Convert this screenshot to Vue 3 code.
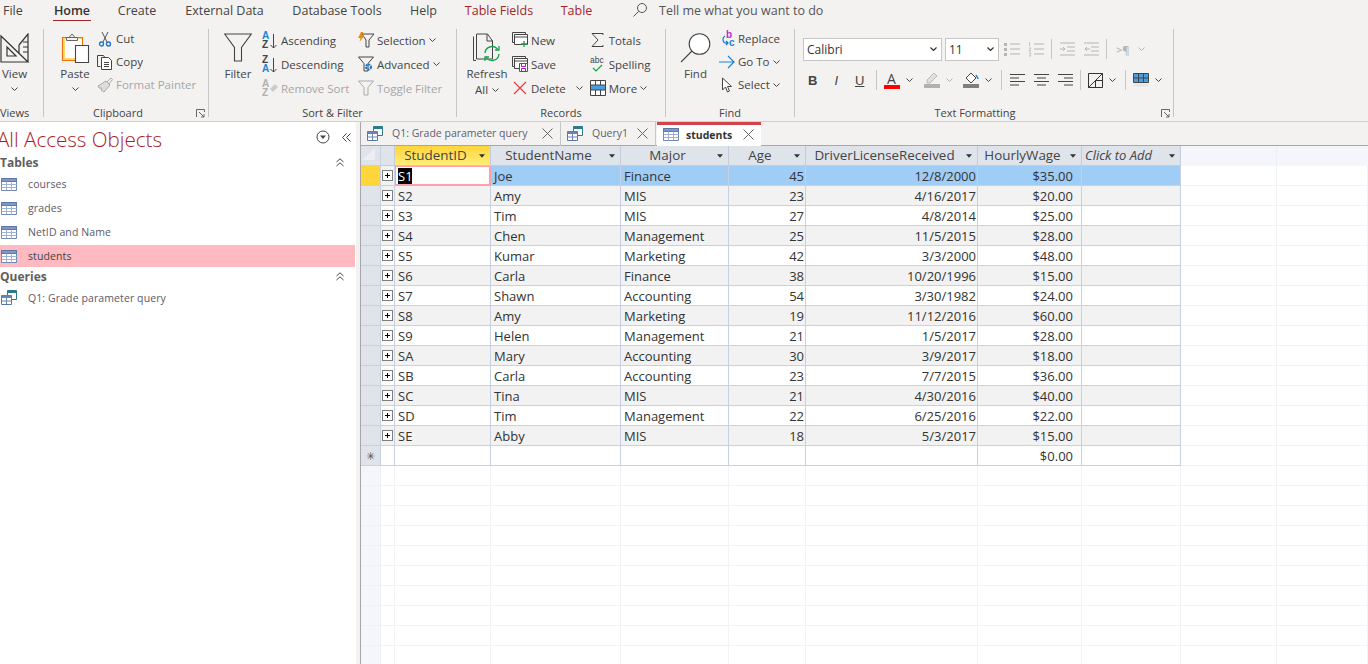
<script setup>
const tabs = [
  { t: 'File', w: 40 }, { t: 'Home', w: 64, active: true }, { t: 'Create', w: 66 }, { t: 'External Data', w: 109 },
  { t: 'Database Tools', w: 116 }, { t: 'Help', w: 57 }, { t: 'Table Fields', w: 94, red: true }, { t: 'Table', w: 61, red: true }
]
const cols = [
  { t: 'StudentID', active: true }, { t: 'StudentName' }, { t: 'Major' }, { t: 'Age' },
  { t: 'DriverLicenseReceived' }, { t: 'HourlyWage' }, { t: 'Click to Add', italic: true }
]
const rows = [
  ['S1','Joe','Finance','45','12/8/2000','$35.00'],['S2','Amy','MIS','23','4/16/2017','$20.00'],
  ['S3','Tim','MIS','27','4/8/2014','$25.00'],['S4','Chen','Management','25','11/5/2015','$28.00'],
  ['S5','Kumar','Marketing','42','3/3/2000','$48.00'],['S6','Carla','Finance','38','10/20/1996','$15.00'],
  ['S7','Shawn','Accounting','54','3/30/1982','$24.00'],['S8','Amy','Marketing','19','11/12/2016','$60.00'],
  ['S9','Helen','Management','21','1/5/2017','$28.00'],['SA','Mary','Accounting','30','3/9/2017','$18.00'],
  ['SB','Carla','Accounting','23','7/7/2015','$36.00'],['SC','Tina','MIS','21','4/30/2016','$40.00'],
  ['SD','Tim','Management','22','6/25/2016','$22.00'],['SE','Abby','MIS','18','5/3/2017','$15.00']
]
const navTables = ['courses', 'grades', 'NetID and Name', 'students']
const blanks = Array.from({ length: 10 }, (_, i) => i)
</script>

<template>
  <div class="app">
    <div class="tabbar">
      <div v-for="t in tabs" :key="t.t" class="tab" :class="{ red: t.red, on: t.active }" :style="{ width: t.w + 'px' }"><span>{{ t.t }}</span></div>
      <svg class="search" width="16" height="16" viewBox="0 0 16 16" fill="none" stroke="#555"><circle cx="10" cy="6" r="4.5"/><path d="M6.7 9.3 1.5 14.5"/></svg>
      <span class="tell">Tell me what you want to do</span>
    </div>

    <div class="ribbon">
      <section class="group g-views">
        <div class="gbody">
          <div class="big w29">
            <svg width="30" height="30" viewBox="0 0 30 30" fill="none" stroke="#333" stroke-width="1.2"><path d="M1 3 28 29H1zM7 14l9 9H7zM19 12 28 1v28M19 12v8M23 9h5M23 14h5M23 19h5"/></svg>
            <span>View</span>
            <svg class="chev" width="7" height="4" viewBox="0 0 7 4"><path d="M.5.5 3.5 3.5 6.5.5" fill="none" stroke="#444"/></svg>
          </div>
        </div>
        <div class="glabel">Views</div>
      </section>

      <section class="group g-clip">
        <div class="gbody">
          <div class="big w28">
            <svg width="29" height="30" viewBox="0 0 29 30" fill="none"><path d="M1.500 4.500h20v23h-20z" fill="#ffd970" stroke="#e8730c" stroke-width="1.200"/><path d="M4 6h17v19H4z" fill="#fff"/><path d="M5.500 4.500h11v3h-11zM8 4.500 11 1l3 3.500" fill="#f3f2f1" stroke="#666"/><path d="M14.500 12.500h13v17h-13z" fill="#fff" stroke="#444" stroke-width="1.100"/></svg>
            <span>Paste</span>
            <svg class="chev" width="7" height="4" viewBox="0 0 7 4"><path d="M.5.5 3.5 3.5 6.5.5" fill="none" stroke="#444"/></svg>
          </div>
          <div class="stack st23 ml8">
            <div class="sm"><svg width="16" height="16" viewBox="0 0 16 16" fill="none"><path d="M5 1 10 11M11 1 6 11" stroke="#555"/><circle cx="4.500" cy="13" r="2" stroke="#1a73c8" stroke-width="1.300"/><circle cx="11.500" cy="13" r="2" stroke="#1a73c8" stroke-width="1.300"/></svg><span>Cut</span></div>
            <div class="sm"><svg width="16" height="16" viewBox="0 0 16 16" fill="none" stroke="#444"><path d="M3.500 12.500H.5V1.500h6l1 1.500"/><path d="M4.500 3.500h7l3 3v9h-10z" fill="#fff"/><path d="M7 8.500h5M7 10.500h5M7 12.500h5"/></svg><span>Copy</span></div>
            <div class="sm dis"><svg width="16" height="16" viewBox="0 0 16 16" fill="none" stroke="#aaa"><path d="M1 9 9 4l4 4-6 7-3-2 1-2-3 0z" fill="#ddd"/><path d="M10 5 14 1l1.500 1.500L12 7"/></svg><span>Format Painter</span></div>
          </div>
        </div>
        <div class="glabel lb-clip">Clipboard</div>
        <svg class="launcher" width="9" height="9" viewBox="0 0 9 9" fill="none" stroke="#666"><path d="M.5 8V.5H8.500V3M3 3l5 5M5 8h3V5"/></svg>
      </section>

      <section class="group g-sort">
        <div class="gbody">
          <div class="big w28">
            <svg width="28" height="30" viewBox="0 0 28 30" fill="#f3f2f1" stroke="#444" stroke-width="1.100"><path d="M.7 1h26.600L17.500 14.500V28h-7V14.500z"/></svg>
            <span>Filter</span>
          </div>
          <div class="stack st24 ml10">
            <div class="sm wide"><svg width="16" height="18" viewBox="0 0 16 18"><text x="0" y="8" class="az blue">A</text><text x="0" y="17" class="az">Z</text><path d="M11.500 3v14M8.500 14l3 3 3-3" fill="none" stroke="#444"/></svg><span>Ascending</span></div>
            <div class="sm wide"><svg width="16" height="18" viewBox="0 0 16 18"><text x="0" y="8" class="az">Z</text><text x="0" y="17" class="az blue">A</text><path d="M11.500 3v14M8.500 14l3 3 3-3" fill="none" stroke="#444"/></svg><span>Descending</span></div>
            <div class="sm wide dis"><svg width="16" height="18" viewBox="0 0 16 18"><text x="0" y="8" class="az gray">A</text><text x="0" y="17" class="az gray">Z</text><path d="M8 10l5-5 3 3-5 5z" fill="#ccc"/></svg><span>Remove Sort</span></div>
          </div>
          <div class="stack st24">
            <div class="sm"><svg width="16" height="16" viewBox="0 0 16 16" fill="none"><path d="M4 2h12l-5 6v7H8V8z" fill="#f3f2f1" stroke="#444"/><path d="M3 0 0 6h2.500L1.500 10 6 4H3.500L5.500 0z" fill="#ed8b00"/></svg><span>Selection</span><svg width="7" height="4" viewBox="0 0 7 4"><path d="M.5.5 3.500 3.500 6.500.5" fill="none" stroke="#444"/></svg></div>
            <div class="sm"><svg width="16" height="16" viewBox="0 0 16 16" fill="none"><path d="M.5 1h15L10 7.500V15H6V7.500z" fill="#f3f2f1" stroke="#444"/><circle cx="10.500" cy="11" r="2.500" stroke="#1a73c8" stroke-width="2" stroke-dasharray="2 .8"/></svg><span>Advanced</span><svg width="7" height="4" viewBox="0 0 7 4"><path d="M.5.5 3.500 3.500 6.500.5" fill="none" stroke="#444"/></svg></div>
            <div class="sm dis"><svg width="16" height="16" viewBox="0 0 16 16" fill="none" stroke="#aaa"><path d="M.5 1h15L10 7.500V15H6V7.500z"/></svg><span>Toggle Filter</span></div>
          </div>
        </div>
        <div class="glabel">Sort &amp; Filter</div>
      </section>

      <section class="group g-rec">
        <div class="gbody">
          <div class="big w40">
            <svg width="28" height="30" viewBox="0 0 28 30" fill="none"><path d="M3.500 1h11l5 7v18h-16z" stroke="#444" fill="#f3f2f1"/><path d="M.5 3.500v24H3" stroke="#444"/><path d="M14 1v7h6" stroke="#444"/><path d="M12 20a7 7 0 0 1 13-3M26 21a7 7 0 0 1-13 3" stroke="#16a34a" stroke-width="1.300"/><path d="M26 13v4h-4M12 28v-4h4" stroke="#16a34a" stroke-width="1.300"/></svg>
            <span>Refresh</span>
            <span class="all">All <svg width="7" height="4" viewBox="0 0 7 4"><path d="M.5.5 3.500 3.500 6.500.5" fill="none" stroke="#444"/></svg></span>
          </div>
          <div class="stack st24 ml5">
            <div class="sm"><svg width="16" height="16" viewBox="0 0 16 16" fill="none" stroke="#444"><path d="M2.500 2.500h13v10h-13z" fill="#fff"/><path d="M.5.500h13v2M.5.500v10h2M2.500 5h13"/><path d="M12 9v6M9 12h6" stroke="#16a34a" stroke-width="1.300"/></svg><span>New</span></div>
            <div class="sm"><svg width="16" height="16" viewBox="0 0 16 16" fill="none" stroke="#444"><path d="M2.500 2.500h13v10h-13z" fill="#fff"/><path d="M.5.500h13v2M.5.500v10h2M2.500 5h13"/><path d="M7.500 7.500h8v8h-8zM9.500 7.500v3h4v-3M9.500 15.500v-3h4v3" fill="#fff" stroke="#a21caf"/></svg><span>Save</span></div>
            <div class="sm"><svg width="16" height="16" viewBox="0 0 16 16" fill="none" stroke="#e0403a" stroke-width="1.200"><path d="M2 2l12 12M14 2 2 14"/></svg><span>Delete</span><svg class="c3" width="7" height="4" viewBox="0 0 7 4"><path d="M.5.5 3.500 3.500 6.500.5" fill="none" stroke="#444"/></svg></div>
          </div>
          <div class="stack st24 rcol">
            <div class="sm"><svg width="16" height="16" viewBox="0 0 16 16" fill="none" stroke="#444"><path d="M13 3V1.500H2L8 8l-6 6.500h11V13"/></svg><span>Totals</span></div>
            <div class="sm"><svg width="16" height="18" viewBox="0 0 16 18" fill="none"><text x="0" y="8" class="abc">abc</text><path d="M3 13l3 3 6-6" stroke="#16a34a" stroke-width="1.200"/></svg><span>Spelling</span></div>
            <div class="sm"><svg width="16" height="16" viewBox="0 0 16 16" fill="none" stroke="#444"><path d="M.5.500h15v15H.5z" fill="#fff"/><path d="M1 5h14v5H1z" fill="#4a9de0" stroke="none"/><path d="M.5 5h15M.5 10h15M5.500 10v5M10.500 10v5M5.500.5V5M10.500.5V5"/></svg><span>More</span><svg width="7" height="4" viewBox="0 0 7 4"><path d="M.5.5 3.500 3.500 6.500.5" fill="none" stroke="#444"/></svg></div>
          </div>
        </div>
        <div class="glabel">Records</div>
      </section>

      <section class="group g-find">
        <div class="gbody">
          <div class="big w30">
            <svg width="31" height="30" viewBox="0 0 31 30" fill="#fff" stroke="#444" stroke-width="1.100"><circle cx="19.500" cy="11" r="10.300"/><path d="M12 18 1 29"/></svg>
            <span>Find</span>
          </div>
          <div class="stack st23 ml8">
            <div class="sm"><svg width="16" height="18" viewBox="0 0 16 18" fill="none"><text x="7" y="8" class="az mag">b</text><text x="10" y="16" class="az blue">c</text><path d="M6 6a4 4 0 0 0 0 7l3 0M7 11l2 2-2 2" stroke="#1a73c8" stroke-width="1.200"/></svg><span>Replace</span></div>
            <div class="sm"><svg width="16" height="16" viewBox="0 0 16 16" fill="none" stroke="#1a84d8" stroke-width="1.200"><path d="M0 8h15M9 2l6 6-6 6"/></svg><span>Go To</span><svg width="7" height="4" viewBox="0 0 7 4"><path d="M.5.5 3.500 3.500 6.500.5" fill="none" stroke="#444"/></svg></div>
            <div class="sm"><svg width="16" height="16" viewBox="0 0 16 16" fill="#fff" stroke="#444"><path d="M3.500 1v12l3-3 2 5 2-1-2-4.500h4z"/></svg><span>Select</span><svg width="7" height="4" viewBox="0 0 7 4"><path d="M.5.5 3.500 3.500 6.500.5" fill="none" stroke="#444"/></svg></div>
          </div>
        </div>
        <div class="glabel">Find</div>
      </section>

      <section class="group g-text">
        <div class="gbody col">
          <div class="trow r1">
            <div class="sel font"><span>Calibri</span><svg width="7" height="4" viewBox="0 0 7 4"><path d="M.5.5 3.500 3.500 6.500.5" fill="none" stroke="#333" stroke-width="1.200"/></svg></div>
            <div class="sel size"><span>11</span><svg width="7" height="4" viewBox="0 0 7 4"><path d="M.5.5 3.500 3.500 6.500.5" fill="none" stroke="#333" stroke-width="1.200"/></svg></div>
            <svg class="ti m5" width="16" height="16" viewBox="0 0 16 16" stroke="#b5b5b5"><path d="M6 3h10M6 8h10M6 13h10" fill="none"/><path d="M0 2h3v3H0zM0 7h3v3H0zM0 12h3v3H0z" fill="#b5b5b5" stroke="none"/></svg>
            <svg class="ti m8" width="16" height="16" viewBox="0 0 16 16" stroke="#b5b5b5"><path d="M6 3h10M6 8h10M6 13h10" fill="none"/><path d="M1.500 1v4M1 7h2l-2 3h2M1 12h2l-1 1.500L3 15H1" fill="none" stroke-width=".8"/></svg>
            <i class="vsep m7"></i>
            <svg class="ti m8" width="15" height="16" viewBox="0 0 15 16" fill="none" stroke="#b5b5b5"><path d="M0 2h15M7 6h8M7 10h8M0 14h15M0 8h5M3 6l2 2-2 2"/></svg>
            <svg class="ti m9" width="15" height="16" viewBox="0 0 15 16" fill="none" stroke="#b5b5b5"><path d="M0 2h15M7 6h8M7 10h8M0 14h15M1 8h5M3 6 1 8l2 2"/></svg>
            <i class="vsep m7"></i>
            <span class="para">&gt;¶</span>
            <svg class="ti m8" width="7" height="4" viewBox="0 0 7 4"><path d="M.5.5 3.500 3.500 6.500.5" fill="none" stroke="#b5b5b5"/></svg>
          </div>
          <div class="trow r2">
            <b class="fmt fb">B</b><i class="fmt fi">I</i><u class="fmt fu">U</u>
            <i class="vsep s5"></i>
            <div class="colorb m7"><span class="ca">A</span><i class="bar red"></i></div>
            <svg class="cc" width="7" height="4" viewBox="0 0 7 4"><path d="M.5.5 3.500 3.500 6.500.5" fill="none" stroke="#444"/></svg>
            <div class="colorb m11"><svg width="16" height="12" viewBox="0 0 16 12" fill="none" stroke="#b8b8b8"><path d="M3 8 10 1l3 3-7 7H3z" fill="#e0e0e0"/></svg><i class="bar grey1"></i></div>
            <svg class="cc" width="7" height="4" viewBox="0 0 7 4"><path d="M.5.5 3.500 3.500 6.500.5" fill="none" stroke="#b5b5b5"/></svg>
            <div class="colorb m10"><svg width="16" height="12" viewBox="0 0 16 12" fill="none" stroke="#444"><path d="M3 6 8 1l5 5-5 5z" fill="#fff"/><path d="M13 3c1 2 2 3 2 4" stroke="#2680c2" stroke-width="1.500"/></svg><i class="bar grey2"></i></div>
            <svg class="cc" width="7" height="4" viewBox="0 0 7 4"><path d="M.5.5 3.500 3.500 6.500.5" fill="none" stroke="#444"/></svg>
            <i class="vsep m9"></i>
            <svg class="ti m8" width="15" height="14" viewBox="0 0 15 14" fill="none" stroke="#444"><path d="M0 1.500h15M0 5h9M0 8.500h15M0 12h9"/></svg>
            <svg class="ti m9" width="15" height="14" viewBox="0 0 15 14" fill="none" stroke="#444"><path d="M0 1.500h15M3 5h9M0 8.500h15M3 12h9"/></svg>
            <svg class="ti m9" width="15" height="14" viewBox="0 0 15 14" fill="none" stroke="#444"><path d="M0 1.500h15M6 5h9M0 8.500h15M6 12h9"/></svg>
            <i class="vsep m7"></i>
            <svg class="ti m7" width="15" height="15" viewBox="0 0 15 15" fill="none" stroke="#333"><path d="M.5.5h14v14H.5zM.5 14.500l14-14M7.500 7.500v7M7.500 7.500h7"/></svg>
            <svg class="cc" width="7" height="4" viewBox="0 0 7 4"><path d="M.5.5 3.500 3.500 6.500.5" fill="none" stroke="#444"/></svg>
            <i class="vsep m9"></i>
            <svg class="ti m7" width="16" height="15" viewBox="0 0 16 15" fill="none" stroke="#444"><path d="M.5.500h15v9H.5z" fill="#4a9de0"/><path d="M.5 5h15M5.500.5v9M10.500.5v9"/><path d="M.5 12h15" stroke="#e6e6e6" stroke-width="3"/></svg>
            <svg class="cc" width="7" height="4" viewBox="0 0 7 4"><path d="M.5.5 3.500 3.500 6.500.5" fill="none" stroke="#444"/></svg>
          </div>
        </div>
        <div class="glabel lb-text">Text Formatting</div>
        <svg class="launcher" width="9" height="9" viewBox="0 0 9 9" fill="none" stroke="#666"><path d="M.5 8V.5H8.500V3M3 3l5 5M5 8h3V5"/></svg>
      </section>
    </div>

    <div class="main">
      <aside class="nav">
        <div class="navhead">
          <span class="navtitle">All Access Objects</span>
          <svg class="navdd" width="14" height="14" viewBox="0 0 14 14" fill="none" stroke="#444"><circle cx="7" cy="7" r="6"/><path d="M4 5.500h6L7 9z" fill="#444" stroke="none"/></svg>
          <svg class="navcol" width="9" height="9" viewBox="0 0 9 9" fill="none" stroke="#444"><path d="M4.500.5.500 4.500l4 4M8.500.5l-4 4 4 4"/></svg>
        </div>
        <div class="navsec"><span>Tables</span><svg width="8" height="9" viewBox="0 0 8 9" fill="none" stroke="#444"><path d="M.5 4 4 .8 7.500 4M.5 8 4 4.800 7.500 8"/></svg></div>
        <div v-for="n in navTables" :key="n" class="navitem" :class="{ sel2: n === 'students' }">
          <svg width="16" height="13" viewBox="0 0 16 13" fill="none"><path d="M.5.500h15v12H.5z" fill="#fff" stroke="#6e88b5"/><path d="M.5.500h15v3H.5z" fill="#7f98c4" stroke="#5c76a6"/><path d="M5.500 3.500v9M10.500 3.500v9M.5 6.500h15M.5 9.500h15" stroke="#9fb2d4"/></svg>
          <span>{{ n }}</span>
        </div>
        <div class="navsec q"><span>Queries</span><svg width="8" height="9" viewBox="0 0 8 9" fill="none" stroke="#444"><path d="M.5 4 4 .8 7.500 4M.5 8 4 4.800 7.500 8"/></svg></div>
        <div class="navitem qi">
          <svg width="16" height="15" viewBox="0 0 16 15" fill="none"><path d="M6.500.500h9v9h-9z" fill="#fff" stroke="#2a7d8c"/><path d="M6.500.500h9v2.500h-9z" fill="#2a7d8c"/><path d="M.5 5.500h10v9H.5z" fill="#fff" stroke="#5c76a6"/><path d="M.5 5.500h10v2.500H.5z" fill="#6a84b4"/><path d="M5.500 8v6M.5 11h10" stroke="#6a84b4"/></svg>
          <span>Q1: Grade parameter query</span>
        </div>
      </aside>
      <div class="split"></div>

      <div class="doc">
        <div class="doctabs">
          <div class="dt t1">
            <svg width="16" height="15" viewBox="0 0 16 15" fill="none"><path d="M6.500.500h9v9h-9z" fill="#fff" stroke="#2a7d8c"/><path d="M6.500.500h9v2.500h-9z" fill="#2a7d8c"/><path d="M.5 5.500h10v9H.5z" fill="#fff" stroke="#5c76a6"/><path d="M.5 5.500h10v2.500H.5z" fill="#6a84b4"/><path d="M5.500 8v6M.5 11h10" stroke="#6a84b4"/></svg>
            <span>Q1: Grade parameter query</span>
            <svg class="x" width="11" height="11" viewBox="0 0 11 11" fill="none" stroke="#666"><path d="M.5.500l10 10M10.500.5l-10 10"/></svg>
          </div>
          <div class="dt t2">
            <svg width="16" height="15" viewBox="0 0 16 15" fill="none"><path d="M6.500.500h9v9h-9z" fill="#fff" stroke="#2a7d8c"/><path d="M6.500.500h9v2.500h-9z" fill="#2a7d8c"/><path d="M.5 5.500h10v9H.5z" fill="#fff" stroke="#5c76a6"/><path d="M.5 5.500h10v2.500H.5z" fill="#6a84b4"/><path d="M5.500 8v6M.5 11h10" stroke="#6a84b4"/></svg>
            <span>Query1</span>
            <svg class="x" width="11" height="11" viewBox="0 0 11 11" fill="none" stroke="#666"><path d="M.5.500l10 10M10.500.5l-10 10"/></svg>
          </div>
          <div class="dt t3">
            <svg width="16" height="13" viewBox="0 0 16 13" fill="none"><path d="M.5.500h15v12H.5z" fill="#fff" stroke="#6e88b5"/><path d="M.5.500h15v3H.5z" fill="#7f98c4" stroke="#5c76a6"/><path d="M5.500 3.500v9M10.500 3.500v9M.5 6.500h15M.5 9.500h15" stroke="#9fb2d4"/></svg>
            <b>students</b>
            <svg class="x" width="11" height="11" viewBox="0 0 11 11" fill="none" stroke="#666"><path d="M.5.500l10 10M10.500.5l-10 10"/></svg>
          </div>
        </div>

        <div class="sheet">
          <div class="grow head">
            <div class="cell corner"><svg width="14" height="14" viewBox="0 0 14 14"><path d="M14 1v12H1z" fill="#eceef3"/></svg></div>
            <div class="cell hc exp"></div>
            <div v-for="c in cols" :key="c.t" class="cell hc" :class="{ hact: c.active, hit: c.italic }">
              <span>{{ c.t }}</span>
              <svg class="hdd" width="6" height="4" viewBox="0 0 7 4"><path d="M0 0h7L3.500 4z" fill="#333"/></svg>
            </div>
            <div class="cell ext"></div><div class="cell ext last"></div>
          </div>
          <div v-for="(r, i) in rows" :key="r[0]" class="grow" :class="{ alt: i % 2 === 1, cur: i === 0 }">
            <div class="cell sel3" :class="{ yellow: i === 0 }"></div>
            <div class="cell expc"><span class="plus"></span></div>
            <div class="cell txt first" :class="{ focus: i === 0 }"><span v-if="i === 0" class="hilite">{{ r[0] }}</span><template v-else>{{ r[0] }}</template></div>
            <div class="cell txt">{{ r[1] }}</div>
            <div class="cell txt">{{ r[2] }}</div>
            <div class="cell txt rt">{{ r[3] }}</div>
            <div class="cell txt rt">{{ r[4] }}</div>
            <div class="cell txt rt wage">{{ r[5] }}</div>
            <div class="cell txt"></div>
            <div class="cell blank"></div><div class="cell blank last"></div>
          </div>
          <div class="grow">
            <div class="cell sel3 star">✳</div>
            <div class="cell expc"></div>
            <div class="cell txt"></div><div class="cell txt"></div><div class="cell txt"></div><div class="cell txt"></div><div class="cell txt"></div>
            <div class="cell txt rt wage">$0.00</div>
            <div class="cell txt"></div>
            <div class="cell blank"></div><div class="cell blank last"></div>
          </div>
          <div v-for="b in blanks" :key="b" class="grow empty">
            <div class="cell tint"></div>
            <div v-for="n in 8" :key="n" class="cell blank"></div>
            <div class="cell blank"></div><div class="cell blank last"></div>
          </div>
        </div>
      </div>
    </div>
  </div>
</template>

<style>
html, body { margin: 0; background: #fff; overflow: hidden; }
</style>

<style scoped>
.app { width: 1368px; height: 664px; overflow: hidden; font-family: "Open Sans", "Noto Sans", sans-serif; color: #444; display: flex; flex-direction: column; }

/* menu tabs */
.tabbar { height: 21px; background: #f3f2f1; display: flex; align-items: flex-start; flex: none; }
.tab { font-size: 12.5px; line-height: 21px; height: 21px; flex: none; color: #444; display: flex; justify-content: center; box-sizing: border-box; }
.tab:first-child { justify-content: flex-start; padding-left: 3px; }
.tab.on { color: #333; font-weight: 600; }
.tab.on span { border-bottom: 2.5px solid #a4262c; height: 20px; padding: 0 1px; }
.tab.red { color: #a4262c; }
.search { margin: 2px 0 0 25px; }
.tell { font-size: 12.5px; line-height: 21px; margin-left: 11px; color: #555; }

/* ribbon */
.ribbon { height: 100px; background: #f3f2f1; border-bottom: 1px solid #d2d0ce; display: flex; flex: none; box-sizing: content-box; }
.group { position: relative; flex: none; height: 88px; margin-top: 8px; border-right: 1px solid #c8c6c4; box-sizing: border-box; font-size: 11.5px; }
.g-views { width: 44px; }
.g-clip { width: 165px; padding-left: 17px; }
.g-sort { width: 248px; padding-left: 15px; }
.g-rec { width: 209px; padding-left: 10px; }
.g-find { width: 129px; padding-left: 14px; }
.g-text { width: 379px; padding-left: 8px; }
.gbody { display: flex; height: 72px; }
.gbody.col { flex-direction: column; }
.glabel { position: absolute; left: 0; right: 0; top: 77px; line-height: 14px; text-align: center; font-size: 11px; color: #444; }
.g-views .glabel { right: 15px; }
.glabel.lb-clip { right: 16px; }
.glabel.lb-text { right: 18px; }
.launcher { position: absolute; right: 3px; top: 80px; }

.big { display: flex; flex-direction: column; align-items: center; padding-top: 4px; flex: none; }
.big > svg:first-child { margin-bottom: 2px; flex: none; }
.big span { line-height: 17px; }
.big .all { line-height: 15px; }
.chev { margin-top: 5px; }
.w29 { width: 29px; }
.w28 { width: 28px; }
.w30 { width: 31px; }
.w40 { width: 40px; }
.all svg { vertical-align: 2px; margin-left: 1px; }

.stack { display: flex; flex-direction: column; flex: none; }
.st24 { margin-top: -1px; }
.st24 .sm { height: 24px; }
.st23 .sm { height: 23px; }
.st23 { margin-top: -2px; }
.ml5 { margin-left: 5px; }
.ml8 { margin-left: 8px; }
.ml10 { margin-left: 10px; }
.sm { display: flex; align-items: center; gap: 3px; white-space: nowrap; }
.sm.wide { width: 96px; }
.sm svg:first-child { flex: none; }
.rcol { margin-left: 7px; }
.c3 { margin-left: 7px; }
.dis { color: #a6a6a6; }
.az { font: bold 10px "Liberation Sans", sans-serif; fill: #444; }
.az.blue { fill: #1a84d8; }
.az.gray { fill: #b0b0b0; }
.az.mag { fill: #c026d3; }
.abc { font: 8.5px "Liberation Sans", sans-serif; fill: #444; }

/* text formatting */
.trow { display: flex; align-items: center; flex: none; }
.r1 { height: 24px; margin-top: 8px; }
.r2 { height: 24px; margin: 7px 0 0 -2px; }
.sel { height: 23px; background: #fff; border: 1px solid #c8c6c4; box-sizing: border-box; display: flex; align-items: center; justify-content: space-between; padding: 0 4px 0 3px; font: 12px "Open Sans", sans-serif; color: #333; }
.font { width: 139px; }
.size { width: 54px; margin-left: 3px; }
.vsep { width: 1px; height: 20px; background: #c8c6c4; flex: none; display: block; }
.ti { flex: none; }
.m5 { margin-left: 5px; }
.m7 { margin-left: 7px; }
.m8 { margin-left: 8px; }
.m9 { margin-left: 9px; }
.m10 { margin-left: 10px; }
.m11 { margin-left: 11px; }
.s5 { margin-left: 4px; }
.para { font-size: 11px; color: #b5b5b5; margin-left: 9px; font-weight: 600; }
.fmt { width: 23.5px; text-align: center; font: 13px "Liberation Sans", sans-serif; color: #444; flex: none; }
.fb { font-weight: 700; }
.fi { font-style: italic; }
.colorb { width: 16px; display: flex; flex-direction: column; align-items: center; flex: none; }
.ca { font-size: 14px; line-height: 13px; color: #444; }
.bar { display: block; width: 16px; height: 4px; font-style: normal; }
.bar.red { background: #f00; }
.bar.grey1 { background: #b3b0ad; }
.bar.grey2 { background: #7f7f7f; }
.cc { margin-left: 6px; flex: none; }

/* main */
.main { flex: 1; display: flex; min-height: 0; }
.nav { width: 356px; flex: none; background: #fff; }
.split { width: 5px; flex: none; background: #f3f2f1; border-right: 1px solid #a6a6ad; box-sizing: border-box; }
.navhead { height: 32px; display: flex; align-items: center; }
.navtitle { font-size: 20.6px; font-weight: 300; color: #a81c28; margin: 2px 0 0 -3px; line-height: 32px; flex: 1; }
.navdd { margin: -2px 12px 0 0; }
.navcol { margin: -2px 5px 0 0; }
.navsec { height: 17px; display: flex; align-items: center; justify-content: space-between; padding-right: 12px; font-weight: 700; font-size: 12px; color: #605e5c; margin-bottom: 1px; }
.navitem { height: 24px; display: flex; align-items: center; gap: 11px; font-size: 10.5px; color: #5a5a6e; padding-left: 1px; letter-spacing: .1px; }
.navitem.sel2 { background: #ffb9c0; width: 355px; height: 22px; color: #444; margin-top: 1px; box-sizing: border-box; }
.navsec.q { margin-top: 1px; margin-bottom: 2px; }
.navitem.qi { height: 21px; }

.doc { flex: 1; min-width: 0; display: flex; flex-direction: column; }
.doctabs { height: 24px; background: #f3f2f1; display: flex; flex: none; box-sizing: border-box; border-bottom: 1px solid #a6a6ad; }
.dt { height: 24px; box-sizing: border-box; display: flex; align-items: center; font-size: 10.5px; color: #605e6e; flex: none; padding: 0 0 2px 6px; border-right: 1px solid #c8c6c4; }
.dt span { margin-left: 9px; flex: 1; white-space: nowrap; }
.dt .x { margin-right: 7px; }
.t1 { width: 200px; }
.t2 { width: 95px; margin-right: 1px; }
.t3 { width: 104px; background: #fff; border-top: 3px solid #d4434b; border-right: 0; padding-bottom: 2px; }
.t3 b { margin-left: 7px; flex: 1; font-size: 10.5px; color: #333; }

.sheet { flex: 1; min-height: 0; overflow: hidden; }
.grow { display: grid; grid-template-columns: 20px 14px 96px 130px 108px 77px 172px 104px 99px 96px 91px; height: 20px; flex: none; }
.cell { box-sizing: border-box; border-right: 1px solid #c9d0e3; border-bottom: 1px solid #c9d0e3; min-width: 0; font-size: 13px; line-height: 20px; color: #333; overflow: hidden; white-space: nowrap; }
.corner { background: #dfe3ea; border-color: #c9d0e3; }
.hc { background: #dfe3ea; border-color: #c5cbd8; display: flex; align-items: center; justify-content: center; position: relative; color: #444; font-size: 13.4px; }
.hc span { padding: 0 14px 1px 0; line-height: 18px; }
.hdd { position: absolute; right: 5px; top: 8px; }
.hact { background: linear-gradient(#ffd53c, #ffee78); }
.hit { font-style: italic; justify-content: flex-start; padding-left: 3px; font-size: 13px; }
.ext { background: #f5f5fc; border-right: 1px solid #eeeef6; border-bottom: 1px solid #f5f5fc; }
.last { border-right: 0; }
.sel3 { background: #dfe3ea; }
.yellow { background: #ffd53c; }
.expc { background: #fff; display: flex; align-items: center; justify-content: center; }
.plus { width: 9px; height: 9px; border: 1px solid #7f7f7f; background: linear-gradient(#000, #000) center / 5px 1px no-repeat, linear-gradient(#000, #000) center / 1px 5px no-repeat, #fff; margin: -1px 1px 0 0; }
.txt { padding: 0 3px; background: #fff; }
.rt { text-align: right; padding-right: 1px; }
.wage { padding-right: 8px; }
.alt .txt { background: #f2f2f2; }
.alt .expc { background: #f2f2f2; }
.cur .txt { background: #9fcdf6; }
.cur .expc { background: #f2f2f2; }
.cur .first.focus { background: #fff; border: 1px solid #ffa0a8; border-bottom-width: 2px; border-right-width: 2px; padding: 0 2px; line-height: 19px; }
.hilite { background: #000; color: #fff; display: inline-block; width: 14px; line-height: 17px; }
.star { text-align: center; font-size: 11px; color: #555; line-height: 19px; }
.blank { background: #fff; border-right: 1px solid #f2f3f8; border-bottom: 1px solid #f2f3f8; }
.tint { background: #f5f5fc; border-right: 1px solid #eeeef6; border-bottom: 1px solid #f0f0f8; }
</style>
